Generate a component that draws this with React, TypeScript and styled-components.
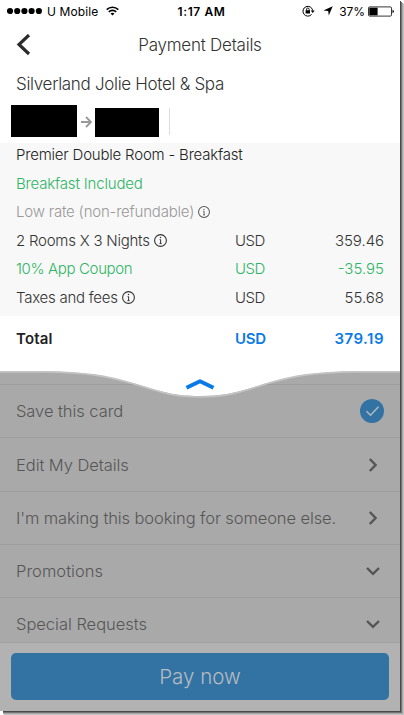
import React from "react";
import styled, { createGlobalStyle } from "styled-components";

const Global = createGlobalStyle`
  *, *::before, *::after { box-sizing: border-box; }
  body { margin: 0; background: #fff; font-family: Inter, "Liberation Sans", sans-serif; overflow: hidden; }
  svg { display: block; flex: none; }
`;

const Page = styled.div`
  width: 404px;
  height: 715px;
  background: #fff;
`;

const Screen = styled.main`
  width: 400px;
  height: 711px;
  display: flex;
  flex-direction: column;
  background: #fff;
  box-shadow: 1px 1px 0 #4a4a4a, 2px 2px 0 #747474, 3px 3px 1px #a8a8a8, 4px 4px 1px #c8c8c8;
  clip-path: polygon(0 0, 404px 0, 404px 715px, 3px 715px, 3px 711px, 0 711px);
`;

const StatusBar = styled.header`
  display: grid;
  grid-template-columns: 1fr auto 1fr;
  align-items: center;
  height: 22px;
  padding: 0 6px 0 7px;
  font-size: 12px;
  color: #000;
`;

const StatusGroup = styled.div<{ $end?: boolean }>`
  display: flex;
  align-items: center;
  justify-content: ${(p) => (p.$end ? "flex-end" : "flex-start")};
`;

const Carrier = styled.span`
  margin: 0 8px 0 3px;
  font-size: 12px;
  letter-spacing: 0.12px;
`;

const Percent = styled.span`
  margin: 0 3px 0 6px;
  font-size: 12px;
  letter-spacing: -0.05px;
`;

const LockSlot = styled.div`
  margin-right: 8px;
`;

const Clock = styled.div`
  font-weight: 600;
  letter-spacing: 0.6px;
  padding-left: 2px;
`;

const Label = styled.span<{ $size?: number; $track?: number; $weight?: number; $color?: string }>`
  font-size: ${(p) => p.$size ?? 15}px;
  font-weight: ${(p) => p.$weight ?? 300};
  letter-spacing: ${(p) => p.$track ?? 0}px;
  color: ${(p) => p.$color ?? "inherit"};
  white-space: nowrap;
`;

const NavBar = styled.nav`
  display: grid;
  grid-template-columns: 60px 1fr 60px;
  align-items: center;
  height: 45px;
  padding-left: 16px;
  padding-right: 16px;
`;

const NavTitle = styled.h1`
  margin: 0;
  font-size: 17px;
  font-weight: 300;
  text-align: center;
  color: #333;
  letter-spacing: -0.25px;
`;

const HotelName = styled.h2`
  margin: 0;
  padding-left: 16px;
  height: 34px;
  line-height: 34px;
  font-size: 17px;
  font-weight: 300;
  color: #333;
  letter-spacing: -0.31px;
`;

const Dates = styled.div`
  display: flex;
  align-items: flex-end;
  height: 36px;
  padding: 0 0 0 11px;
`;

const Redacted = styled.div<{ $w: number; $h: number }>`
  width: ${(p) => p.$w}px;
  height: ${(p) => p.$h}px;
  background: #000;
`;

const DateArrow = styled.div`
  width: 18px;
  height: 31px;
  display: flex;
  align-items: center;
  justify-content: center;
`;

const DateRule = styled.div`
  width: 1px;
  height: 27px;
  margin: 0 0 2px 10px;
  background: #ddd;
`;

const Breakdown = styled.section`
  height: 173px;
  margin-top: 6px;
  padding: 0 16px;
  background: #f8f8f8;
  color: #333;
`;

const PriceRow = styled.div<{ $first?: boolean; $color?: string }>`
  display: grid;
  grid-template-columns: 219px 1fr auto;
  align-items: center;
  height: ${(p) => (p.$first ? 26 : 28.5)}px;
  padding-bottom: ${(p) => (p.$first ? 3 : 0)}px;
  color: ${(p) => p.$color ?? "#333"};
`;

const RowTitle = styled.div`
  display: flex;
  align-items: center;
  gap: 4px;
`;

const TotalRow = styled.section`
  display: grid;
  grid-template-columns: 219px 1fr auto;
  align-items: center;
  height: 45px;
  padding: 0 16px;
`;

const Lower = styled.section`
  position: relative;
  flex: 1;
  display: flex;
  flex-direction: column;
  padding-top: 23px;
  background: #a9a9a9;
`;

const Wave = styled.svg`
  position: absolute;
  top: 0;
  left: 0;
`;

const Option = styled.div<{ $h: number; $drop?: number }>`
  display: flex;
  align-items: center;
  justify-content: space-between;
  height: ${(p) => p.$h}px;
  padding: ${(p) => p.$drop ?? 0}px 16px 0;
  border-top: 1px solid #9d9d9d;
  color: #565656;
`;

const IconSlot = styled.div<{ $nudge?: number }>`
  width: 24px;
  display: flex;
  justify-content: center;
  margin-right: ${(p) => -(p.$nudge ?? 0)}px;
`;

const Footer = styled.footer`
  flex: 1;
  padding: 10px 11px 11px;
  background: #b2b2b2;
  border-top: 1px solid #a0a0a0;
`;

const PayButton = styled.button`
  display: flex;
  align-items: center;
  justify-content: center;
  width: 378px;
  height: 47px;
  padding: 0;
  border: 0;
  border-radius: 5px;
  background: #3373a4;
  color: #b5bbc0;
  font: 300 20.5px Inter, sans-serif;
`;

const InfoIcon = ({ size = 13, color = "#333" }: { size?: number; color?: string }) => (
  <svg width={size} height={size} viewBox="0 0 13 13" fill="none" stroke={color} strokeWidth="1.1">
    <circle cx="6.5" cy="6.5" r="5.9" />
    <path d="M5.6 5.6h1v4M5.5 9.6h2.1" strokeWidth="1" />
    <circle cx="6.5" cy="3.6" r=".75" fill={color} stroke="none" />
  </svg>
);

const SignalDots = () => (
  <svg width="37" height="8" viewBox="0 0 37 8">
    {[3, 10.2, 17.4, 24.6, 31.9].map((x) => (
      <circle key={x} cx={x} cy="4" r="3.1" />
    ))}
  </svg>
);

const WifiIcon = () => (
  <svg width="13" height="10" viewBox="0 0 13 10" fill="none" stroke="#000" strokeWidth="1.6">
    <path d="M.7 3.6a8.3 8.3 0 0 1 11.6 0M2.8 5.9a5.3 5.3 0 0 1 7.4 0" />
    <path d="M4.5 7.6a2.9 2.9 0 0 1 4 0l-2 2z" fill="#000" stroke="none" />
  </svg>
);

const LockIcon = () => (
  <svg width="13" height="12" viewBox="0 0 13 12" fill="none" stroke="#000">
    <path d="M9.6 9.4A4.9 4.9 0 1 1 10.7 5.5" strokeWidth="1" />
    <path d="M8.7 5.5h4l-2 2.5z" fill="#000" stroke="none" />
    <rect x="3.6" y="5.2" width="4.4" height="3.3" fill="#000" stroke="none" />
    <path d="M4.5 5.4V4.3a1.3 1.3 0 0 1 2.6 0v1.1" strokeWidth=".9" />
  </svg>
);

const LocationIcon = () => (
  <svg width="10" height="10" viewBox="0 0 10 10">
    <path d="M9.7.3 5.8 9.5 5.2 4.9.4 4.4z" />
  </svg>
);

const BatteryIcon = () => (
  <svg width="26" height="11" viewBox="0 0 26 11">
    <rect x=".5" y=".9" width="23" height="9.2" rx="1.2" fill="#fff" stroke="#000" strokeWidth=".8" />
    <rect x="1.3" y="1.7" width="8.3" height="7.6" />
    <path d="M24.5 3.8q1.3.3 1.3 1.7t-1.3 1.7z" />
  </svg>
);

const ChevronRight = () => (
  <svg width="10" height="14" viewBox="0 0 10 14" fill="none" stroke="#555" strokeWidth="2.4">
    <path d="M1.8 1l5.8 6-5.8 6" />
  </svg>
);

const ChevronDown = () => (
  <svg width="14" height="10" viewBox="0 0 14 10" fill="none" stroke="#555" strokeWidth="2.4">
    <path d="M1 2l6 5.8L13 2" />
  </svg>
);

const CheckBadge = () => (
  <svg width="24" height="24" viewBox="0 0 24 24" fill="none">
    <circle cx="12" cy="12" r="12" fill="#3373a4" />
    <path d="M6.5 12.2l4 4 8-8.4" stroke="#b2b9bf" strokeWidth="1.5" />
  </svg>
);

const GREEN = "#2eb566";
const BLUE = "#0a7be6";

export default function App() {
  return (
    <Page>
      <Global />
      <Screen>
        <StatusBar>
          <StatusGroup>
            <SignalDots />
            <Carrier>U Mobile</Carrier>
            <WifiIcon />
          </StatusGroup>
          <Clock>1:17 AM</Clock>
          <StatusGroup $end>
            <LockSlot><LockIcon /></LockSlot>
            <LocationIcon />
            <Percent>37%</Percent>
            <BatteryIcon />
          </StatusGroup>
        </StatusBar>
        <NavBar>
          <svg width="15" height="22" viewBox="0 0 15 22" fill="none" stroke="#2c2c2c" strokeWidth="3.2">
            <path d="M13 1L3 10.5 13 20" />
          </svg>
          <NavTitle>Payment Details</NavTitle>
        </NavBar>
        <HotelName>Silverland Jolie Hotel &amp; Spa</HotelName>
        <Dates>
          <Redacted $w={66} $h={32} />
          <DateArrow>
            <svg width="11" height="12" viewBox="0 0 11 12" fill="none" stroke="#999" strokeWidth="1.8">
              <path d="M0 6h10M5 1l5 5-5 5" />
            </svg>
          </DateArrow>
          <Redacted $w={64} $h={29} />
          <DateRule />
        </Dates>
        <Breakdown>
          <PriceRow $first>
            <Label $color="#222" $track={-0.2}>Premier Double Room - Breakfast</Label>
          </PriceRow>
          <PriceRow $color={GREEN}>
            <Label $track={-0.17}>Breakfast Included</Label>
          </PriceRow>
          <PriceRow $color="#999">
            <RowTitle>
              <Label $track={-0.2}>Low rate (non-refundable)</Label>
              <InfoIcon size={12} color="#555" />
            </RowTitle>
          </PriceRow>
          <PriceRow>
            <RowTitle>
              <Label $track={-0.23}>2 Rooms X 3 Nights</Label>
              <InfoIcon />
            </RowTitle>
            <Label $track={-0.5}>USD</Label>
            <Label $track={-0.05}>359.46</Label>
          </PriceRow>
          <PriceRow $color={GREEN}>
            <Label $track={-0.35}>10% App Coupon</Label>
            <Label $track={-0.5}>USD</Label>
            <Label $track={0}>-35.95</Label>
          </PriceRow>
          <PriceRow>
            <RowTitle>
              <Label $track={-0.25}>Taxes and fees</Label>
              <InfoIcon />
            </RowTitle>
            <Label $track={-0.5}>USD</Label>
            <Label $track={0}>55.68</Label>
          </PriceRow>
        </Breakdown>
        <TotalRow>
          <Label $weight={600} $color="#222" $track={0.15}>Total</Label>
          <Label $weight={600} $color={BLUE} $track={-0.3}>USD</Label>
          <Label $weight={600} $color={BLUE} $track={0.5}>379.19</Label>
        </TotalRow>
        <Lower>
          <Option $h={53}>
            <Label $size={16.5} $track={-0.06}>Save this card</Label>
            <IconSlot><CheckBadge /></IconSlot>
          </Option>
          <Option $h={54}>
            <Label $size={16.5} $track={-0.06}>Edit My Details</Label>
            <IconSlot $nudge={1}><ChevronRight /></IconSlot>
          </Option>
          <Option $h={53}>
            <Label $size={16.5} $track={-0.1}>I'm making this booking for someone else.</Label>
            <IconSlot $nudge={1}><ChevronRight /></IconSlot>
          </Option>
          <Option $h={53}>
            <Label $size={16.5} $track={0.03}>Promotions</Label>
            <IconSlot $nudge={1}><ChevronDown /></IconSlot>
          </Option>
          <Option $h={45} $drop={8}>
            <Label $size={16.5} $track={-0.02}>Special Requests</Label>
            <IconSlot $nudge={1}><ChevronDown /></IconSlot>
          </Option>
          <Footer>
            <PayButton>Pay now</PayButton>
          </Footer>
          <Wave width="400" height="40" viewBox="0 0 400 40" fill="none">
            <path d="M0 0V10.5H45C85 11 105 14 136 23C165 32 177 35 200 35C223 35 236 32 264 23C295 14 315 11 355 10.5H400V0Z" fill="#fff" />
            <path d="M0 10.8H45C85 11.3 105 14.3 136 23.5C165 32.8 177 36 200 36C223 36 236 32.8 264 23.5C295 14.3 315 11.3 355 10.8H400" stroke="#c4c4c4" strokeWidth="1.7" />
            <path d="M186.5 26.8L200 20.3l13.5 6.5" stroke={BLUE} strokeWidth="4" strokeLinejoin="round" />
          </Wave>
        </Lower>
      </Screen>
    </Page>
  );
}
